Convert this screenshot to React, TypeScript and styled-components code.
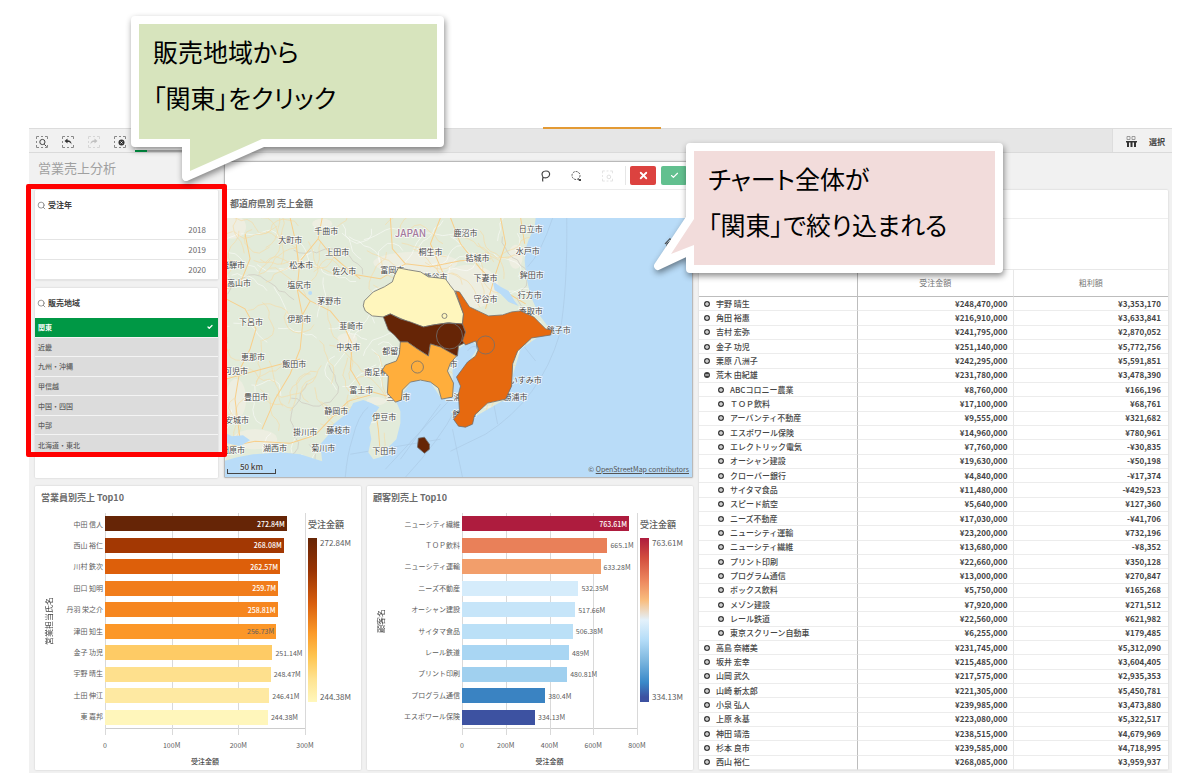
import React from "react";
import styled, { createGlobalStyle, css } from "styled-components";
import { Check, Search, X } from "lucide-react";

const GlobalStyle = createGlobalStyle`
  *, *::before, *::after { box-sizing: border-box; }
  body {
    margin: 0;
    background: #fff;
    color: #404040;
    font-family: "Noto Sans CJK JP", "Noto Sans", sans-serif;
    font-size: 8px;
    line-height: 12px;
  }
  button { font: inherit; color: inherit; background: none; border: 0; padding: 0; cursor: pointer; }
  h1, h2, p, ul { margin: 0; padding: 0; }
`;

/* ---------- frame ---------- */

const Page = styled.div`
  position: relative;
  padding: 128px 7px 7px 29px;
`;

const Frame = styled.div`
  position: relative;
  background: #f1f1f1;
`;

const ActiveTabMark = styled.div`
  position: absolute;
  top: -1px;
  left: 45%;
  width: 118px;
  height: 2px;
  background: #e39a35;
`;

const SelectionBar = styled.header`
  display: flex;
  height: 25px;
  border-top: 1px solid #dcdcdc;
  border-bottom: 1px solid #dadada;
  background: #e6e6e6;
`;

const BarTools = styled.div`
  display: flex;
  align-items: center;
  gap: 14px;
  width: 106px;
  padding: 2px 0 0 7px;
  background: #f1f1f1;
`;

const IconButton = styled.button<{ $faded?: boolean }>`
  display: flex;
  opacity: ${(p) => (p.$faded ? 0.25 : 1)};
`;

const SelectionChip = styled.button`
  width: 48px;
  border-bottom: 2px solid #b4b4b4;
  background: #fff;
  position: relative;
  &::after {
    content: "";
    position: absolute;
    left: 0;
    bottom: -2px;
    width: 12px;
    height: 2px;
    background: #009845;
  }
`;

const BarEnd = styled.button`
  display: flex;
  align-items: center;
  gap: 12px;
  width: 60px;
  margin-left: auto;
  padding: 2px 0 0 13px;
  background: #f1f1f1;
  border-left: 1px solid #ddd;
  font-weight: 700;
  white-space: nowrap;
`;

const Sheet = styled.main`
  display: grid;
  grid-template-columns: minmax(0, 658fr) minmax(0, 469fr);
  gap: 6px;
  padding: 0 4px 3px 6px;
`;

const LeftArea = styled.div`
  display: flex;
  flex-direction: column;
  gap: 8px;
`;

const TopRow = styled.div`
  display: flex;
  gap: 6px;
`;

const ChartRow = styled.div`
  display: grid;
  grid-template-columns: repeat(2, minmax(0, 1fr));
  gap: 6px;
`;

const Card = styled.section`
  background: #fff;
  border-radius: 1px;
  box-shadow: 0 0 2px rgba(0, 0, 0, 0.18);
`;

const CardTitle = styled.h2`
  padding: 5px 6px 4px;
  font-size: 9px;
  line-height: 14px;
  color: #6b6b6b;
`;

/* ---------- filter column ---------- */

const FilterColumn = styled.div`
  display: flex;
  flex-direction: column;
  width: 183px;
  flex: none;
`;

const SheetTitle = styled.h1`
  height: 37px;
  padding: 5px 3px;
  font-size: 13px;
  line-height: 20px;
  font-weight: 400;
  color: #a0a0a0;
`;

const FilterCard = styled(Card)`
  & + & { margin-top: 8px; flex: 1; }
`;

const FilterTitle = styled.h2`
  display: flex;
  align-items: center;
  gap: 2px;
  height: 30px;
  padding: 0 2px;
  font-size: 8px;
  color: #404040;
  svg { color: #777; }
`;

const OptionList = styled.ul<{ $rows: number; $height: number }>`
  display: grid;
  grid-template-rows: repeat(${(p) => p.$rows}, 1fr);
  height: ${(p) => p.$height}px;
  list-style: none;
`;

const Option = styled.button<{ $state: "open" | "selected" | "alternative" }>`
  display: flex;
  align-items: center;
  width: 100%;
  height: 100%;
  border-bottom: 1px solid #e4e4e4;
  ${(p) =>
    p.$state === "open" &&
    css`
      justify-content: flex-end;
      padding-right: 12px;
      color: #6a6a6a;
    `}
  ${(p) =>
    p.$state !== "open" &&
    css`
      justify-content: space-between;
      padding: 0 5px 0 3px;
      border-bottom-color: #f4f4f4;
      font-size: 7px;
      background: #dcdcdc;
      color: #606060;
      font-weight: 500;
    `}
  ${(p) =>
    p.$state === "selected" &&
    css`
      background: #009845;
      color: #fff;
      font-weight: 700;
    `}
`;

/* ---------- map ---------- */

const MapCard = styled(Card)`
  display: flex;
  flex-direction: column;
  flex: 1;
  min-width: 0;
  margin-top: 8px;
  border: 1px solid #b9b9b9;
`;

const MapTools = styled.div`
  display: flex;
  align-items: center;
  justify-content: flex-end;
  gap: 20px;
  height: 28px;
  padding-right: 5px;
  border-bottom: 1px solid #ececec;
`;

const Decision = styled.div`
  display: flex;
  gap: 5px;
  padding-left: 4px;
  margin-left: -8px;
  border-left: 1px solid #e6e6e6;
`;

const DecisionButton = styled.button<{ $tone: string }>`
  display: flex;
  align-items: center;
  justify-content: center;
  width: 26px;
  height: 19px;
  border-radius: 2px;
  background: ${(p) => p.$tone};
  color: #fff;
`;

const MapTitle = styled(CardTitle)`
  padding: 7px 5px;
`;

const MapView = styled.div`
  position: relative;
  height: 259px;
  background: #b9dcf8;
  svg { display: block; width: 100%; height: 100%; }
`;

const Attribution = styled.p`
  position: absolute;
  right: 3px;
  bottom: 2px;
  font-size: 7px;
  color: #555;
  a { color: inherit; }
`;

const ScaleBar = styled.div`
  position: absolute;
  left: 2px;
  bottom: 3px;
  width: 49px;
  height: 12px;
  text-align: center;
  font-weight: 500;
  line-height: 10px;
  text-shadow: 0 0 2px #fff;
  &::after {
    content: "";
    position: absolute;
    left: 0;
    right: 0;
    bottom: 0;
    height: 5px;
    border: 1px solid #444;
    border-top: 0;
  }
`;

/* ---------- charts ---------- */

const ChartBody = styled.div<{ $labels: number }>`
  display: grid;
  grid-template-columns: ${(p) => p.$labels}px minmax(0, 1fr) 56px;
  padding-top: 4px;
  font-size: 7px;
  color: #5c5c5c;
`;

const LabelColumn = styled.div`
  display: flex;
  height: 216px;
`;

const AxisName = styled.div`
  writing-mode: vertical-rl;
  text-orientation: sideways;
  transform: rotate(180deg);
  width: 12px;
  margin-left: 8px;
  text-align: center;
  font-size: 8px;
  line-height: 12px;
  color: #444;
`;

const Labels = styled.div`
  display: grid;
  grid-auto-rows: 1fr;
  align-items: center;
  flex: 1;
  padding-right: 2px;
  padding-bottom: 2px;
  text-align: right;
  white-space: nowrap;
`;

const Plot = styled.div`
  position: relative;
  height: 216px;
  border-bottom: 1px solid #ccc;
`;

const GridLine = styled.div`
  position: absolute;
  top: 0;
  height: 222px;
  width: 1px;
  background: #d9d9d9;
`;

const Bars = styled.div`
  position: relative;
  display: grid;
  grid-auto-rows: 1fr;
  align-items: center;
  height: 100%;
`;

const BarLine = styled.div`
  display: flex;
  align-items: center;
  height: 15px;
`;

const Bar = styled.div<{ $light?: boolean }>`
  display: flex;
  align-items: center;
  justify-content: flex-end;
  flex: none;
  height: 15px;
  padding-right: 2px;
  color: ${(p) => (p.$light ? "#fff" : "#5f5f5f")};
  font-weight: ${(p) => (p.$light ? 500 : 400)};
`;

const OutsideValue = styled.span`
  padding-left: 3px;
`;

const Ticks = styled.div`
  grid-column: 2;
  position: relative;
  height: 22px;
`;

const Tick = styled.span`
  position: absolute;
  top: 10px;
  transform: translateX(-50%);
`;

const AxisTitle = styled.div`
  grid-column: 2;
  height: 15px;
  line-height: 20px;
  margin-bottom: 4px;
  text-align: center;
  font-weight: 500;
  color: #444;
`;

const Legend = styled.div`
  padding: 5px 0 0 3px;
  font-size: 8px;
  h3 {
    margin: 0 0 6px;
    font-size: 9px;
    line-height: 14px;
    font-weight: 500;
  }
`;

const LegendScale = styled.div`
  display: flex;
  gap: 3px;
  height: 164px;
`;

const Gradient = styled.div<{ $stops: string }>`
  width: 9px;
  background: linear-gradient(${(p) => p.$stops});
`;

const LegendEnds = styled.div`
  display: flex;
  flex-direction: column;
  justify-content: space-between;
  line-height: 10px;
`;

/* ---------- pivot table ---------- */

const PivotCard = styled(Card)`
  display: flex;
  flex-direction: column;
  margin-top: 37px;
`;

const PivotTitleSpace = styled.div`
  height: 29px;
  border-bottom: 1px solid #eee;
`;

const PivotDimensions = styled.div`
  height: 51px;
  border-bottom: 1px solid #e8e8e8;
`;

const Pivot = styled.table`
  width: 100%;
  height: 500px;
  table-layout: fixed;
  border-collapse: separate;
  border-spacing: 0;
  font-weight: 700;
  color: #454545;
  th, td { padding: 0; border-bottom: 1px solid #ececec; line-height: 12px; }
  thead th {
    height: 27px;
    border-bottom-color: #bdbdbd;
    font-weight: 400;
    color: #777;
  }
  thead th + th, td { border-left: 1px solid #e8e8e8; }
  thead th:nth-child(2), tbody td:nth-child(2) { border-left-color: #bdbdbd; }
  tbody th { text-align: left; font-weight: 500; }
  td { text-align: right; padding-right: 5px; }
  td:last-child { padding-right: 7px; }
`;

const Member = styled.div<{ $child?: boolean }>`
  display: flex;
  align-items: center;
  gap: 6px;
  padding-left: ${(p) => (p.$child ? 19 : 5)}px;
  white-space: nowrap;
`;

/* ---------- annotations ---------- */

const Highlight = styled.div`
  position: absolute;
  left: 26px;
  top: 184px;
  width: 201px;
  height: 273px;
  border: 5px solid #f00;
  border-radius: 2px;
  pointer-events: none;
`;

const Callout = styled.aside<{ $x: number; $y: number; $w: number }>`
  position: absolute;
  left: ${(p) => p.$x}px;
  top: ${(p) => p.$y}px;
  width: ${(p) => p.$w}px;
  svg {
    position: absolute;
    inset: 0;
    overflow: visible;
    filter: drop-shadow(1px 3px 3px rgba(0, 0, 0, 0.45));
  }
`;

const CalloutText = styled.p`
  position: relative;
  padding: 12px 22px;
  color: #000;
  font-size: 25px;
  line-height: 46px;
  font-weight: 400;
  font-feature-settings: "palt";
  white-space: nowrap;
`;

/* ---------- data ---------- */

type BarItem = [name: string, value: number, label: string, color: string, place: "in" | "dark" | "out"];

const staff: BarItem[] = [
  ["中田 信人", 272.84, "272.84M", "#662506", "in"],
  ["西山 裕仁", 268.08, "268.08M", "#a33803", "in"],
  ["川村 鉄次", 262.57, "262.57M", "#dd5f0a", "in"],
  ["田口 知明", 259.7, "259.7M", "#f17d1b", "in"],
  ["丹羽 栄之介", 258.81, "258.81M", "#f6861f", "in"],
  ["津田 知生", 256.73, "256.73M", "#fc9728", "dark"],
  ["金子 功児", 251.14, "251.14M", "#fecb65", "out"],
  ["宇野 晴生", 248.47, "248.47M", "#fee08d", "out"],
  ["土田 伸江", 246.41, "246.41M", "#fee9a2", "out"],
  ["東 嘉邦", 244.38, "244.38M", "#fff6bb", "out"],
];

const customers: BarItem[] = [
  ["ニューシティ繊維", 763.61, "763.61M", "#ae1c3e", "in"],
  ["ＴＯＰ飲料", 665.1, "665.1M", "#e98059", "out"],
  ["ニューシティ運輸", 633.28, "633.28M", "#f29e6b", "out"],
  ["ニーズ不動産", 532.35, "532.35M", "#d5ecfb", "out"],
  ["オーシャン建設", 517.66, "517.66M", "#c6e5f9", "out"],
  ["サイタマ食品", 506.38, "506.38M", "#bbe0f7", "out"],
  ["レール鉄道", 489, "489M", "#a9d6f3", "out"],
  ["プリント印刷", 480.81, "480.81M", "#a0d0ef", "out"],
  ["プログラム通信", 380.4, "380.4M", "#3a83c2", "out"],
  ["エスポワール保険", 334.13, "334.13M", "#3d52a1", "out"],
];

type PivotRow = [name: string, sales: string, profit: string, kind?: "open" | "child"];

const pivotRows: PivotRow[] = [
  ["宇野 晴生", "¥248,470,000", "¥3,353,170"],
  ["角田 裕惠", "¥216,910,000", "¥3,633,841"],
  ["吉村 宏弥", "¥241,795,000", "¥2,870,052"],
  ["金子 功児", "¥251,140,000", "¥5,772,756"],
  ["栗原 八洲子", "¥242,295,000", "¥5,591,851"],
  ["荒木 由紀雄", "¥231,780,000", "¥3,478,390", "open"],
  ["ABCコロニー農業", "¥8,760,000", "¥166,196", "child"],
  ["ＴＯＰ飲料", "¥17,100,000", "¥68,761", "child"],
  ["アーバンティ不動産", "¥9,555,000", "¥321,682", "child"],
  ["エスポワール保険", "¥14,960,000", "¥780,961", "child"],
  ["エレクトリック電気", "¥7,760,000", "-¥30,835", "child"],
  ["オーシャン建設", "¥19,630,000", "-¥50,198", "child"],
  ["クローバー銀行", "¥4,840,000", "-¥17,374", "child"],
  ["サイタマ食品", "¥11,480,000", "-¥429,523", "child"],
  ["スピード航空", "¥5,640,000", "¥127,360", "child"],
  ["ニーズ不動産", "¥17,030,000", "-¥41,706", "child"],
  ["ニューシティ運輸", "¥23,200,000", "¥732,196", "child"],
  ["ニューシティ繊維", "¥13,680,000", "-¥8,352", "child"],
  ["プリント印刷", "¥22,660,000", "¥350,128", "child"],
  ["プログラム通信", "¥13,000,000", "¥270,847", "child"],
  ["ボックス飲料", "¥5,750,000", "¥165,268", "child"],
  ["メゾン建設", "¥7,920,000", "¥271,512", "child"],
  ["レール鉄道", "¥22,560,000", "¥621,982", "child"],
  ["東京スクリーン自動車", "¥6,255,000", "¥179,485", "child"],
  ["高島 奈緒美", "¥231,745,000", "¥5,312,090"],
  ["坂井 宏幸", "¥215,485,000", "¥3,604,405"],
  ["山岡 武久", "¥217,575,000", "¥2,935,353"],
  ["山崎 新太郎", "¥221,305,000", "¥5,450,781"],
  ["小泉 弘人", "¥239,985,000", "¥3,473,880"],
  ["上原 永基", "¥223,080,000", "¥5,322,517"],
  ["神田 靖浩", "¥238,515,000", "¥4,679,969"],
  ["杉本 良市", "¥239,585,000", "¥4,718,995"],
  ["西山 裕仁", "¥268,085,000", "¥3,959,937"],
];

const cities: [string, number, number][] = [
  ["千曲市", 326, 232], ["大町市", 290, 241], ["上田市", 337, 253], ["松本市", 301, 266],
  ["佐久市", 344, 272], ["飛騨市", 233, 266], ["高山市", 239, 284], ["塩尻市", 299, 286],
  ["茅野市", 329, 302], ["伊那市", 299, 320], ["下呂市", 251, 323], ["韮崎市", 351, 327],
  ["恵那市", 253, 358], ["飯田市", 294, 365], ["可児市", 236, 372], ["豊田市", 256, 398],
  ["中央市", 348, 348], ["都留市", 394, 352], ["南足柄市", 380, 373], ["富士市", 361, 391],
  ["静岡市", 336, 412], ["伊豆市", 384, 418], ["掛川市", 305, 433], ["藤枝市", 338, 431],
  ["安城市", 237, 421], ["田原市", 233, 451], ["湖西市", 275, 449], ["菊川市", 323, 449],
  ["下田市", 384, 452], ["三島市", 398, 398], ["三浦市", 457, 398], ["川崎市", 445, 365],
  ["館山市", 464, 415], ["いすみ市", 525, 381], ["勝浦市", 515, 398], ["銚子市", 558, 331],
  ["香取市", 530, 312], ["行方市", 529, 296], ["鉾田市", 531, 276], ["水戸市", 527, 252],
  ["日立市", 530, 230], ["鹿沼市", 465, 234], ["結城市", 477, 259], ["下妻市", 485, 279],
  ["守谷市", 485, 300], ["桐生市", 430, 253], ["富岡市", 392, 271], ["熊谷市", 435, 278],
];

const LAND =
  "M220 210H536L534 228L528 241L525 250L524 262L526 280L530 297L538 315L549 330L520 350L505 400L470 420L460 400L470 360L478 348L470 341L458 350L452 372L453 398L441 400L430 383L412 381L396 403L400 412L400 424L396 440L388 448L383 457L373 460L368 453L371 440L369 428L374 415L379 408L371 404L363 401L353 404L348 413L333 425L327 437L320 445L322 462L300 455L280 453L253 455L237 458L220 463Z";

/* Minor roads: wandering polylines from a fixed-seed generator. */
const roadNetwork = (seed: number, count: number, steps: number) => {
  let s = seed;
  const rnd = () => {
    s = (s * 16807) % 2147483647;
    return s / 2147483647;
  };
  const paths: string[] = [];
  for (let i = 0; i < count; i++) {
    let x = 225 + rnd() * 315;
    let y = 218 + rnd() * 245;
    let a = rnd() * 6.28;
    let d = `M${x.toFixed(1)} ${y.toFixed(1)}`;
    for (let k = 0; k < steps; k++) {
      a += (rnd() - 0.5) * 1.5;
      x += Math.cos(a) * 6;
      y += Math.sin(a) * 6;
      d += `L${x.toFixed(1)} ${y.toFixed(1)}`;
    }
    paths.push(d);
  }
  return paths.join("");
};

const whiteRoads = roadNetwork(77, 80, 7);
const yellowRoads = roadNetwork(4211, 110, 8);
const borders = roadNetwork(901, 12, 14);

/* ---------- pieces ---------- */

const DashedFrame = () => (
  <path d="M.5 3V.5H3M5 .5h2M9 .5h2.500V3M.5 5v2M.5 9v2.500H3M5 11.500h2M9 11.500h2.500V9" stroke="#888" fill="none" />
);

const ToolIcon = ({ kind }: { kind: "search" | "back" | "forward" | "clear" }) => (
  <svg width="12" height="12" viewBox="0 0 12 12">
    <DashedFrame />
    {kind === "search" && <path d="M8.300 8.300L10.500 10.500M9 6a2.600 2.600 0 1 1-5.200 0a2.600 2.600 0 0 1 5.200 0" stroke="#444" fill="none" />}
    {kind === "back" && <path d="M2.500 5L5.500 2.500V4.200C8 4.200 9.500 5.500 9.500 8.500C8.500 6.500 7.500 6 5.500 6V7.500Z" fill="#333" />}
    {kind === "forward" && <path d="M9.500 5L6.500 2.500V4.200C4 4.200 2.500 5.500 2.500 8.500C3.500 6.500 4.500 6 6.500 6V7.500Z" fill="#333" />}
    {kind === "clear" && (
      <>
        <circle cx="7.500" cy="6.500" r="3" fill="#333" />
        <path d="M6.500 5.500l2 2m0-2l-2 2" stroke="#fff" strokeWidth=".8" />
      </>
    )}
  </svg>
);

const Toggle = ({ open }: { open?: boolean }) => (
  <IconButton aria-label={open ? "折りたたむ" : "展開"}>
    <svg width="6" height="6" viewBox="0 0 6 6">
      <circle cx="3" cy="3" r="3" fill="#3c3c3c" />
      <path d={open ? "M1.200 3H4.800" : "M1 3H5M3 1V5"} stroke="#fff" strokeWidth="1" />
    </svg>
  </IconButton>
);

const FilterBox = ({ title, children }: { title: string; children: React.ReactNode }) => (
  <FilterCard>
    <FilterTitle>
      <Search size={9} strokeWidth={2} />
      {title}
    </FilterTitle>
    {children}
  </FilterCard>
);

interface BarChartProps {
  title: string;
  axis: string;
  items: BarItem[];
  max: number;
  ticks: string[];
  labels: number;
  stops: string;
}

const BarChart = ({ title, axis, items, max, ticks, labels, stops }: BarChartProps) => (
  <Card>
    <CardTitle>{title}</CardTitle>
    <ChartBody $labels={labels}>
      <LabelColumn>
        <AxisName>{axis}</AxisName>
        <Labels>
          {items.map(([name]) => (
            <span key={name}>{name}</span>
          ))}
        </Labels>
      </LabelColumn>
      <Plot>
        {ticks.map((t, i) => (
          <GridLine key={t} style={{ left: `${(i / (ticks.length - 1)) * 100}%` }} />
        ))}
        <Bars>
          {items.map(([name, value, label, color, place]) => (
            <BarLine key={name}>
              <Bar $light={place === "in"} style={{ width: `${(value / max) * 100}%`, background: color }}>
                {place !== "out" && label}
              </Bar>
              {place === "out" && <OutsideValue>{label}</OutsideValue>}
            </BarLine>
          ))}
        </Bars>
      </Plot>
      <Legend>
        <h3>受注金額</h3>
        <LegendScale>
          <Gradient $stops={stops} />
          <LegendEnds>
            <span>{items[0][2]}</span>
            <span>{items[items.length - 1][2]}</span>
          </LegendEnds>
        </LegendScale>
      </Legend>
      <Ticks>
        {ticks.map((t, i) => (
          <Tick key={t} style={{ left: `${(i / (ticks.length - 1)) * 100}%` }}>
            {t}
          </Tick>
        ))}
      </Ticks>
      <AxisTitle>受注金額</AxisTitle>
    </ChartBody>
  </Card>
);

const RegionMap = () => (
  <MapView>
    <svg viewBox="225 219 466 259" preserveAspectRatio="xMidYMid slice" role="img" aria-label="都道府県別 売上金額">
      <defs>
        <clipPath id="land">
          <path d={LAND} />
        </clipPath>
      </defs>
      <g fill="none" stroke="#a9c8e3" strokeWidth=".6">
        <path d="M552 219Q540 255 527 268M566 219Q567 290 559 335Q540 400 485 435L450 452M345 478Q347 455 352 440Q358 415 368 408M400 460L440 405M350 455L440 440M452 430L462 478M523 347L535 362M493 404L497 425M405 478Q440 440 455 410M385 470L450 400M467 352q4-6 9-4" />
      </g>
      <path d={LAND} fill="#e2ebda" />
      <g clipPath="url(#land)" fill="none" strokeLinejoin="round">
        <g fill="#f3f0e4" opacity=".7">
          <ellipse cx="415" cy="264" rx="42" ry="11" />
          <ellipse cx="232" cy="228" rx="14" ry="12" />
          <ellipse cx="468" cy="288" rx="30" ry="22" />
          <ellipse cx="255" cy="440" rx="22" ry="10" />
          <ellipse cx="236" cy="400" rx="10" ry="20" />
          <ellipse cx="347" cy="340" rx="10" ry="6" />
          <ellipse cx="322" cy="225" rx="10" ry="5" />
          <ellipse cx="515" cy="258" rx="7" ry="12" />
          <ellipse cx="376" cy="402" rx="10" ry="4" />
        </g>
        <path d={borders} stroke="#cdc8c0" strokeWidth=".7" />
        <path d={whiteRoads} stroke="#fff" strokeWidth=".8" strokeOpacity=".65" />
        <path d={yellowRoads} stroke="#f5dba6" strokeWidth=".8" strokeOpacity=".8" />
        <g stroke="#f8cf8b" strokeWidth="1">
          <path d="M290 219L296 245L299 270L297 290L310 302L330 312L345 330L352 345M297 290L303 320L300 350L290 375L275 400L262 430M310 302L300 320M322 219L318 240L330 255L345 268L360 280M318 240L300 262M390 219L392 250L405 265L430 268L460 262L490 260M405 265L380 280L350 275M226 300L245 310L256 330L250 350L240 370L235 400L240 440M352 345L350 370L362 390L390 398M226 448L255 442L290 444L315 436L330 420L348 402L370 396M450 219L460 245L480 270L500 290L525 305M500 219L505 245L495 275L485 310M520 219L524 245M440 219L430 245L445 280M375 410L378 430L380 455M226 380L255 372L300 360M245 235L250 260L240 285L226 290" />
        </g>
        <g fill="#b9dcf8">
          <path d="M222 432L232 437L243 436L250 441L240 447L222 443Z" />
          <path d="M492 282L500 288L508 292L514 302L518 307L508 303L500 295L494 291Z" />
          <circle cx="310" cy="294" r="2" />
          <path d="M524 266l4 2l-2 4z" />
        </g>
      </g>
      <g fontSize="8" textAnchor="middle" fill="#484848" stroke="#fff" strokeOpacity=".8" strokeWidth="1.500" paintOrder="stroke">
        {cities.map(([name, x, y]) => (
          <text key={name} x={x} y={y + 3}>
            {name}
          </text>
        ))}
        <text x="410" y="238" fontSize="10" fontWeight="500" fill="#a3799c">
          JAPAN
        </text>
      </g>
      <g stroke="#6f6f6f" strokeWidth=".8" strokeLinejoin="round">
        <path fill="#fff6bd" d="M398 269L408 271L420 273L428 278L437 279L445 280L450 287L454 292L463 315L462 325L447 324L433 326L423 328L408 323L390 315L383 318L372 317L365 312L363 307L364 302L373 293L384 288L392 283L394 277Z" />
        <path fill="#662506" d="M383 318L390 315L400 320L410 323L423 328L433 326L447 324L462 325L465 333L464 344L458 347L457 357L452 356L440 348L430 345L428 357L417 350L407 343L400 343L394 336L388 331Z" />
        <path fill="#ffae3c" d="M400 343L407 343L417 350L428 357L430 345L440 348L456 357L450 364L447 372L453 384L452 398L441 400L438 389L430 383L420 381L410 383L402 391L401 401L395 403L387 394L388 377L382 371L385 366L396 362L399 355Z" />
        <path fill="#e6690f" d="M455 292L459 293L469 308L488 317L502 316L511 313L520 312L533 318L545 330L551 331L550 336L531 339L517 352L512 365L511 387L505 400L487 404L474 416L472 425L465 428L458 427L453 420L459 413L458 395L460 387L456 378L467 363L475 357L478 350L475 342L465 346L462 342L465 333L462 325L463 315Z" />
        <path fill="#662506" d="M418 439L424 438L429 445L429 450L424 454L417 448Z" />
        <g fill="none">
          <circle cx="444" cy="317" r="2.500" />
          <circle cx="449" cy="337" r="13" />
          <circle cx="485" cy="346" r="9" />
          <circle cx="417" cy="368" r="6" />
        </g>
      </g>
      <path d="M664 245l5-5l5 5M666 249v-4l4-3" stroke="#444" fill="none" />
    </svg>
    <ScaleBar>50 km</ScaleBar>
    <Attribution>
      © <a href="#osm">OpenStreetMap contributors</a>
    </Attribution>
  </MapView>
);

export default function App() {
  return (
    <Page>
      <GlobalStyle />
      <Frame>
        <ActiveTabMark />
        <SelectionBar>
          <BarTools>
            <IconButton aria-label="選択内容を検索"><ToolIcon kind="search" /></IconButton>
            <IconButton aria-label="戻る"><ToolIcon kind="back" /></IconButton>
            <IconButton aria-label="進む" $faded><ToolIcon kind="forward" /></IconButton>
            <IconButton aria-label="すべてクリア"><ToolIcon kind="clear" /></IconButton>
          </BarTools>
          <SelectionChip aria-label="販売地域の選択" />
          <BarEnd>
            <svg width="11" height="11" viewBox="0 0 11 11">
              <path d="M1 .5h3v3H1zM6 .5h3v3H6z" stroke="#888" fill="none" strokeWidth=".8" />
              <path d="M0 5h11v1.500H0zM1 6h2v5H1zM4.500 6h2v5h-2zM8 6h2v5H8z" fill="#333" />
            </svg>
            選択
          </BarEnd>
        </SelectionBar>

        <Sheet>
          <LeftArea>
            <TopRow>
              <FilterColumn>
                <SheetTitle>営業売上分析</SheetTitle>
                <FilterBox title="受注年">
                  <OptionList $rows={3} $height={60}>
                    {["2018", "2019", "2020"].map((year) => (
                      <li key={year}>
                        <Option $state="open">{year}</Option>
                      </li>
                    ))}
                  </OptionList>
                </FilterBox>
                <FilterBox title="販売地域">
                  <OptionList $rows={7} $height={137}>
                    {["関東", "近畿", "九州・沖縄", "甲信越", "中国・四国", "中部", "北海道・東北"].map((area) => (
                      <li key={area}>
                        <Option $state={area === "関東" ? "selected" : "alternative"}>
                          {area}
                          {area === "関東" && <Check size={6} strokeWidth={5} />}
                        </Option>
                      </li>
                    ))}
                  </OptionList>
                </FilterBox>
              </FilterColumn>

              <MapCard>
                <MapTools>
                  <IconButton aria-label="なげなわ選択">
                    <svg width="11" height="12" viewBox="0 0 11 12">
                      <path d="M3 11.500C1.500 9 4 8 2.500 6C1 3 3 1 6 1C9 1 10 3 9.500 5C9 7.500 6 8.500 3.500 7.500" stroke="#444" fill="none" strokeWidth="1.200" />
                    </svg>
                  </IconButton>
                  <IconButton aria-label="円選択">
                    <svg width="11" height="12" viewBox="0 0 11 12">
                      <circle cx="5" cy="5.500" r="4" stroke="#555" fill="none" strokeDasharray="2 1" />
                      <path d="M7 9h3v2H8z" fill="#444" />
                    </svg>
                  </IconButton>
                  <IconButton aria-label="選択をクリア" $faded>
                    <svg width="11" height="12" viewBox="0 0 12 12">
                      <DashedFrame />
                      <circle cx="7.500" cy="7" r="2" fill="none" stroke="#777" />
                    </svg>
                  </IconButton>
                  <Decision>
                    <DecisionButton $tone="#dc423f" aria-label="キャンセル"><X size={11} strokeWidth={4} /></DecisionButton>
                    <DecisionButton $tone="#62c08f" aria-label="確定"><Check size={9} strokeWidth={3} /></DecisionButton>
                  </Decision>
                </MapTools>
                <MapTitle>都道府県別 売上金額</MapTitle>
                <RegionMap />
              </MapCard>
            </TopRow>

            <ChartRow>
              <BarChart
                title="営業員別売上 Top10"
                axis="営業担当氏名"
                items={staff}
                max={300}
                ticks={["0", "100M", "200M", "300M"]}
                labels={70}
                stops="#662506, #993404 20%, #d95f0e 40%, #fb9a29 58%, #fec44f 72%, #fee391 86%, #fff7bc"
              />
              <BarChart
                title="顧客別売上 Top10"
                axis="顧客名"
                items={customers}
                max={800}
                ticks={["0", "200M", "400M", "600M", "800M"]}
                labels={95}
                stops="#ae1c3e, #d24d3e 12%, #ed875e 26%, #f9bd7e 38%, #e3f1fb 50%, #b5ddf8 62%, #81b9e0 74%, #3a89c9 88%, #3d52a1 97%"
              />
            </ChartRow>
          </LeftArea>

          <PivotCard>
            <PivotTitleSpace />
            <PivotDimensions />
            <Pivot>
              <colgroup>
                <col style={{ width: "158px" }} />
                <col />
                <col />
              </colgroup>
              <thead>
                <tr>
                  <th aria-label="氏名" />
                  <th>受注金額</th>
                  <th>粗利額</th>
                </tr>
              </thead>
              <tbody>
                {pivotRows.map(([name, sales, profit, kind]) => (
                  <tr key={name}>
                    <th scope="row">
                      <Member $child={kind === "child"}>
                        <Toggle open={kind === "open"} />
                        {name}
                      </Member>
                    </th>
                    <td>{sales}</td>
                    <td>{profit}</td>
                  </tr>
                ))}
              </tbody>
            </Pivot>
          </PivotCard>
        </Sheet>
      </Frame>

      <Highlight />

      <Callout $x={131} $y={16} $w={313}>
        <svg width="313" height="170" viewBox="131 16 313 170">
          <path d="M135 20H440V143H263L186 177V143H135Z" fill="#fff" stroke="#fff" strokeWidth="8" strokeLinejoin="round" />
          <path d="M139 24H437V139H262L190 171V139H139Z" fill="#d7e4bd" />
        </svg>
        <CalloutText>
          販売地域から
          <br />
          「関東」をクリック
        </CalloutText>
      </Callout>

      <Callout $x={686} $y={143} $w={317}>
        <svg width="317" height="130" viewBox="686 143 317 130">
          <path d="M690 147H999V269H690V251L658 266L690 218Z" fill="#fff" stroke="#fff" strokeWidth="8" strokeLinejoin="round" />
          <path d="M694 151H995V265H694V245L671 254L694 219Z" fill="#f2dcdb" />
        </svg>
        <CalloutText>
          チャート全体が
          <br />
          「関東」で絞り込まれる
        </CalloutText>
      </Callout>
    </Page>
  );
}
